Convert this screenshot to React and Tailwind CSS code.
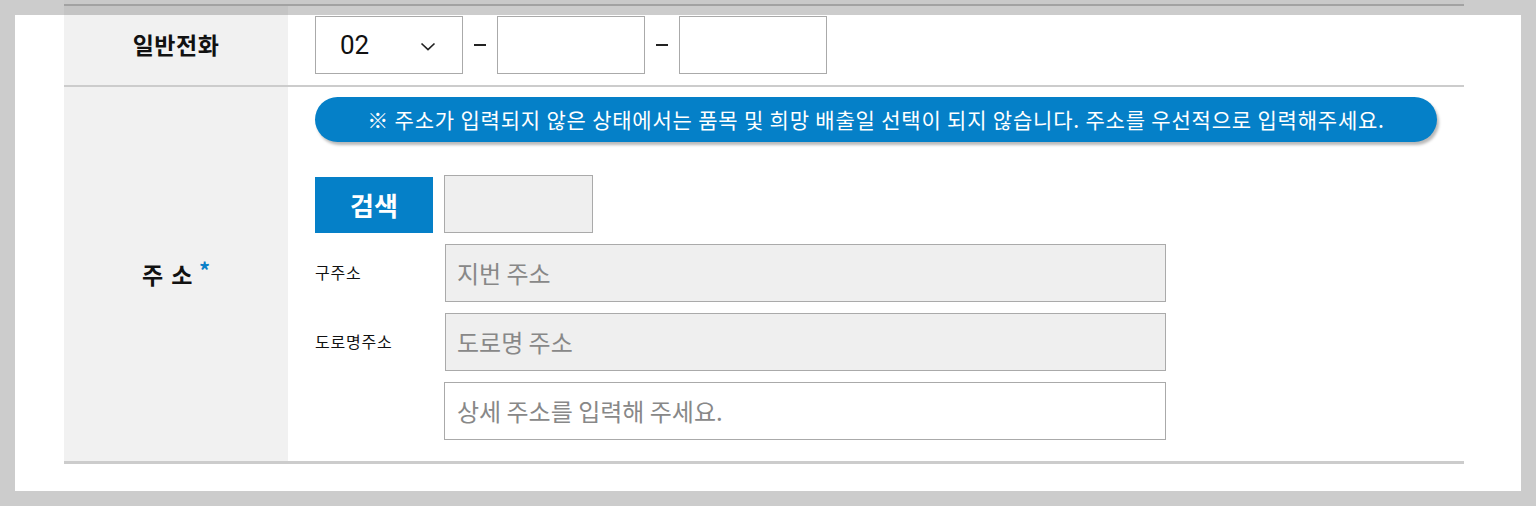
import React from "react";

const KR = { fontFamily: '"Noto Sans CJK KR", "Noto Sans", sans-serif' };

export default function App() {
  return (
    <div className="w-[1536px] h-[506px] bg-[#cccccc] overflow-hidden" style={KR}>
      {/* top strip (scrolled table edge) */}
      <div className="h-[15px] flex">
        <div className="w-[64px]" />
        <div className="w-[1400px] flex flex-col">
          <div className="h-[4px] bg-[#c9c9c9]" />
          <div className="h-[2px] bg-[#a2a2a2]" />
          <div className="flex-1 flex">
            <div className="w-[224px] bg-[#c4c4c4]" />
            <div className="flex-1 bg-[#cccccc]" />
          </div>
        </div>
      </div>

      {/* white panel */}
      <div className="mx-[15px] h-[476px] bg-white pl-[49px] pr-[57px]">
        <div className="w-[1400px]">
          {/* Row 1 */}
          <div className="flex h-[72px] border-b-2 border-[#cccccc]">
            <div className="w-[224px] bg-[#f1f1f1] flex items-center justify-center pb-[12px]">
              <span className="text-[23px] font-bold text-[#111] leading-none tracking-[0.5px]">일반전화</span>
            </div>
            <div className="flex-1 flex items-start pl-[27px] pt-[1px]">
              <div className="w-[148px] h-[58px] border border-[#aaaaaa] bg-white flex items-center pl-[24px] pr-[26px] justify-between">
                <span className="text-[26px] text-[#111] leading-none" style={{ fontFamily: 'Roboto, "Noto Sans", sans-serif' }}>02</span>
                <svg width="16" height="9" viewBox="0 0 16 9" className="mt-[3px]">
                  <path d="M1.5 1.5 L8 7.5 L14.5 1.5" fill="none" stroke="#222" strokeWidth="1.7" />
                </svg>
              </div>
              <div className="w-[34px] h-[58px] flex items-center justify-center">
                <div className="w-[12px] h-[2px] bg-[#222]" />
              </div>
              <div className="w-[148px] h-[58px] border border-[#aaaaaa] bg-white" />
              <div className="w-[34px] h-[58px] flex items-center justify-center">
                <div className="w-[12px] h-[2px] bg-[#222]" />
              </div>
              <div className="w-[148px] h-[58px] border border-[#aaaaaa] bg-white" />
            </div>
          </div>

          {/* Row 2 */}
          <div className="flex h-[377px] border-b-[3px] border-[#cccccc]">
            <div className="w-[224px] bg-[#f1f1f1] flex items-center justify-center">
              <span className="text-[23px] font-bold text-[#111] leading-none tracking-[1.5px]">주 소</span>
              <span className="text-[22px] font-bold text-[#0a80c8] leading-none ml-[5px] -mt-[10px]">*</span>
            </div>
            <div className="flex-1 pl-[27px] pt-[10px] flex flex-col">
              <div className="w-[1122px] h-[45px] rounded-full bg-[#0580c8] shadow-[2px_3px_3px_rgba(0,0,0,0.28)] flex items-center justify-center">
                <span className="text-[21px] text-white leading-none tracking-[0.8px]">
                  ※ 주소가 입력되지 않은 상태에서는 품목 및 희망 배출일 선택이 되지 않습니다. 주소를 우선적으로 입력해주세요.
                </span>
              </div>

              <div className="flex items-start mt-[33px] h-[58px]">
                <div className="w-[118px] h-[56px] mt-[2px] bg-[#0580c8] flex items-center justify-center">
                  <span className="text-[26px] font-bold text-white leading-none">검색</span>
                </div>
                <div className="ml-[11px] w-[149px] h-[58px] bg-[#efefef] border border-[#aaaaaa]" />
              </div>

              <div className="flex items-center mt-[11px]">
                <div className="w-[130px] text-[16px] text-[#111] leading-none tracking-[0.8px] -mt-[2px]">구주소</div>
                <div className="w-[721px] h-[58px] bg-[#efefef] border border-[#aaaaaa] flex items-center pl-[11px]">
                  <span className="text-[24px] text-[#888] leading-none">지번 주소</span>
                </div>
              </div>

              <div className="flex items-center mt-[11px]">
                <div className="w-[130px] text-[16px] text-[#111] leading-none tracking-[0.8px] -mt-[2px]">도로명주소</div>
                <div className="w-[721px] h-[58px] bg-[#efefef] border border-[#aaaaaa] flex items-center pl-[11px]">
                  <span className="text-[24px] text-[#888] leading-none">도로명 주소</span>
                </div>
              </div>

              <div className="flex items-center mt-[11px]">
                <div className="w-[129px]" />
                <div className="w-[722px] h-[58px] bg-white border border-[#aaaaaa] flex items-center pl-[12px]">
                  <span className="text-[24px] text-[#888] leading-none">상세 주소를 입력해 주세요.</span>
                </div>
              </div>
            </div>
          </div>
        </div>
      </div>
    </div>
  );
}
